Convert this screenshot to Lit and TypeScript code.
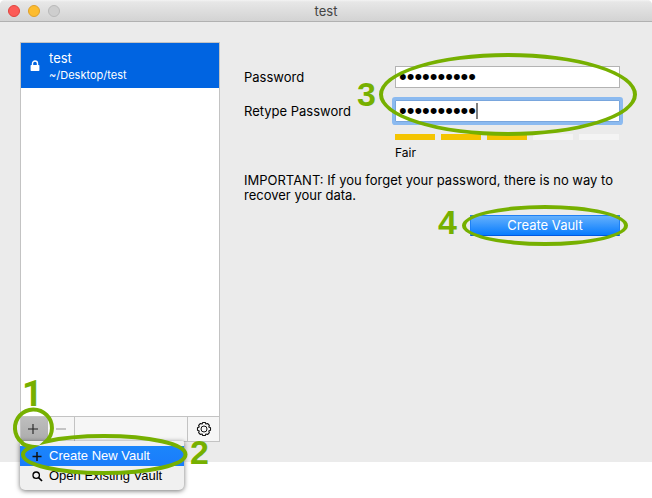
import { LitElement, html, css } from "lit";
import { customElement, property, state } from "lit/decorators.js";
import { classMap } from "lit/directives/class-map.js";

@customElement("vault-sidebar")
class VaultSidebar extends LitElement {
  @state() private menuOpen = true;

  static styles = css`
    :host { display: flex; flex-direction: column; box-sizing: border-box; position: relative; border: 1px solid #c3c3c3; background: #fff; }
    button { font: inherit; border: 0; padding: 0; margin: 0; color: inherit; background: none; }
    .vaults { flex: 1; list-style: none; margin: 0; padding: 0; }
    .vault { display: flex; width: 100%; height: 45px; align-items: center; gap: 9px; padding: 0 9px; box-sizing: border-box; background: #0064e1; color: #fff; text-align: left; }
    .text { display: flex; flex-direction: column; padding-bottom: 1px; }
    .name { font-size: 13px; line-height: 20px; }
    .path { font-size: 11px; line-height: 15px; }
    .tools { display: flex; height: 24px; border-top: 1px solid #c3c3c3; background: #f6f6f6; }
    .tool { width: 27px; display: grid; place-items: center; border-right: 1px solid #c3c3c3; box-sizing: border-box; }
    .add { padding-right: 3px; background: linear-gradient(#bebebe, #acacac); border: 0; }
    .gear { width: 32px; margin-left: auto; border-right: 0; border-left: 1px solid #c3c3c3; }
    .menu { position: absolute; top: 100%; left: -1px; width: 164px; padding: 5px 0 4px; background: #f0f0f0; border-radius: 1px 1px 5px 5px; box-shadow: 0 1px 5px rgba(0, 0, 0, 0.55); font: 13px/20px "Liberation Sans", Arial, sans-serif; color: #000; }
    .item { display: flex; align-items: center; width: 100%; height: 20px; padding: 0 0 0 12px; box-sizing: border-box; gap: 6px; white-space: nowrap; }
    .chosen { background: linear-gradient(#1b86fb, #1a7cfb); }
    .chosen span { color: #fff; }
    .callouts { position: absolute; left: -11px; bottom: -36px; pointer-events: none; }
    .callouts text { font: bold 34px "Liberation Sans", Arial, sans-serif; fill: #76b000; }
    .callouts .one { font: bold 36px Roboto, sans-serif; }
  `;

  render() {
    return html`
      <ul class="vaults">
        <li>
          <button class="vault">
            <svg width="10" height="12" viewBox="0 0 10 12"><path d="M2.5 5.5V3.5a2.5 2.5 0 0 1 5 0v2" fill="none" stroke="#fff" stroke-width="1.4"/><rect x="0.6" y="5" width="8.8" height="6" rx="0.7" fill="#fff"/></svg>
            <span class="text"><span class="name">test</span><span class="path">~/Desktop/test</span></span>
          </button>
        </li>
      </ul>
      <div class="tools">
        <button class="tool add" aria-label="Add vault" aria-expanded=${this.menuOpen} @click=${() => (this.menuOpen = !this.menuOpen)}>
          <svg width="10" height="10"><path d="M5 0v10M0 5h10" stroke="#222" stroke-width="1.1"/></svg>
        </button>
        <button class="tool" aria-label="Remove vault">
          <svg width="10" height="10"><path d="M0 5h10" stroke="#a4a4a4" stroke-width="1.2"/></svg>
        </button>
        <button class="tool gear" aria-label="Settings">
          <svg width="16" height="16" viewBox="-8 -8 16 16" fill="none" stroke="#111" stroke-linejoin="round">
            <path stroke-width="1.1" d="M-1.3 -6.5H1.3L1.9 -5L3.6 -5.5L5.4 -3.7L4.8 -2.1L6.5 -1.3V1.3L4.8 2.1L5.4 3.7L3.6 5.5L1.9 5L1.3 6.5H-1.3L-1.9 5L-3.6 5.5L-5.4 3.7L-4.8 2.1L-6.5 1.3V-1.3L-4.8 -2.1L-5.4 -3.7L-3.6 -5.5L-1.9 -5Z"/>
            <circle r="3" stroke-width="1"/>
          </svg>
        </button>
      </div>
      ${this.menuOpen
        ? html`<div class="menu" role="menu">
            <button class="item chosen" role="menuitem">
              <svg width="11" height="11"><path d="M5 1v9M.5 5.5h9" stroke="#111" stroke-width="1.5"/></svg><span>Create New Vault</span>
            </button>
            <button class="item" role="menuitem">
              <svg width="11" height="11" fill="none" stroke="#000"><circle cx="4.2" cy="4.2" r="3.2" stroke-width="1.3"/><path d="M6.5 6.5L10 10" stroke-width="1.7"/></svg><span>Open Existing Vault</span>
            </button>
          </div>`
        : ""}
      <svg class="callouts" width="204" height="104" viewBox="10 374 204 104" aria-hidden="true">
        <path d="M46 442.5C61 439 82 437 104 437C149 437 185.5 445 185.5 455.5C185.5 466 149 474 104 474C59 474 23 466 23 455.5C23 452.5 26.5 450 32 447.7C26 447 23 446 21.5 443A18.5 18.5 0 1 1 46 442.5Z" fill="none" stroke="#76b000" stroke-width="4"/>
        <text class="one" x="22" y="407">1</text>
        <text x="190" y="465">2</text>
      </svg>
    `;
  }
}

@customElement("vault-form")
class VaultForm extends LitElement {
  @property({ type: Number }) strength = 3;

  static styles = css`
    :host { display: block; font-size: 13px; line-height: 15px; }
    .fields { display: grid; grid-template-columns: 151px 1fr; row-gap: 12px; align-items: center; position: relative; }
    .box { position: relative; display: flex; }
    input { width: 100%; height: 22px; box-sizing: border-box; margin: 0; padding: 0 3px; border: 1px solid #b3b3b3; border-radius: 0; background: #fff; color: #000; font: 22px "Liberation Sans", Arial, sans-serif; outline: 0; }
    .active { border-color: #79a6dd; box-shadow: 0 0 0 3px #8bbaf0; border-radius: 1px; }
    .caret { position: absolute; left: 81px; top: 3px; width: 2px; height: 16px; background: #808080; }
    .meter { grid-column: 2; display: flex; gap: 6px; padding-right: 1px; }
    .bar { flex: 1; height: 6px; background: #f4f4f4; }
    .filled { background: #f4c400; }
    .rating { margin: 5px 0 0 151px; font-size: 12px; line-height: 15px; }
    .note { margin: 13px 0 12px; }
    .actions { display: flex; justify-content: flex-end; }
    .submit { position: relative; }
    .create { width: 150px; height: 21px; padding: 0; border: 1px solid #1e80f5; border-bottom-color: #0058e0; border-radius: 1px; background: linear-gradient(#64b0fc, #087cfe); color: #fff; font: inherit; display: block; }
    .ring { position: absolute; box-sizing: border-box; border: 4px solid #76b000; border-radius: 50%; pointer-events: none; }
    .ring-fields { left: 135px; right: -17px; top: -13px; height: 83px; }
    .ring-create { inset: -10px -8px; }
    .step { position: absolute; font: bold 34px/30px "Liberation Sans", Arial, sans-serif; color: #76b000; pointer-events: none; }
    .step-fields { left: 113px; top: 13px; }
    .step-create { left: -32px; top: -8px; }
  `;

  render() {
    return html`
      <form @submit=${(e: Event) => e.preventDefault()}>
        <div class="fields">
          <label for="password">Password</label>
          <div class="box"><input id="password" type="password" value="vaultvault" autocomplete="off" /></div>
          <label for="retype">Retype Password</label>
          <div class="box"><input id="retype" class="active" type="password" value="vaultvault" autocomplete="off" /><span class="caret"></span></div>
          <div class="meter" role="img" aria-label="Password strength">
            ${[0, 1, 2, 3, 4].map((i) => html`<span class=${classMap({ bar: true, filled: i < this.strength })}></span>`)}
          </div>
          <span class="ring ring-fields"></span>
          <span class="step step-fields">3</span>
        </div>
        <div class="rating">Fair</div>
        <p class="note">IMPORTANT: If you forget your password, there is no way to recover your data.</p>
        <div class="actions">
          <div class="submit">
            <button class="create" type="submit">Create Vault</button>
            <span class="ring ring-create"></span>
            <span class="step step-create">4</span>
          </div>
        </div>
      </form>
    `;
  }
}

@customElement("app-root")
class AppRoot extends LitElement {
  static styles = css`
    :host { display: flex; flex-direction: column; min-height: 100vh; box-sizing: border-box; padding-bottom: 36px; background: #fff; color: #000; font-family: Inter, "Noto Sans", sans-serif; }
    .window { flex: 1; display: flex; flex-direction: column; background: #ebebeb; border-radius: 5px 5px 0 0; }
    .titlebar { display: grid; grid-template-columns: 1fr auto 1fr; align-items: center; height: 22px; box-sizing: border-box; padding: 0 8px; border-bottom: 1px solid #b1b1b1; border-radius: 5px 5px 0 0; background: linear-gradient(#f4f4f4, #e7e7e7 2px, #d3d3d3); }
    .lights { display: flex; gap: 8px; }
    .light { width: 12px; height: 12px; padding: 0; box-sizing: border-box; border: 1px solid #e0443e; border-radius: 50%; background: #fc5b57; }
    .minimize { background: #fdbc2e; border-color: #e0a028; }
    .zoom { background: #cecece; border-color: #b9b9b9; }
    h1 { margin: 0; font-size: 13px; line-height: 18px; font-weight: 400; color: #444; }
    .content { flex: 1; display: grid; grid-template-columns: 200px 1fr; column-gap: 24px; padding: 20px 32px 20px 20px; }
    vault-form { padding-top: 24px; }
  `;

  render() {
    return html`
      <div class="window">
        <header class="titlebar">
          <div class="lights">
            <button class="light" aria-label="Close"></button>
            <button class="light minimize" aria-label="Minimize"></button>
            <button class="light zoom" aria-label="Zoom" disabled></button>
          </div>
          <h1>test</h1>
        </header>
        <main class="content">
          <vault-sidebar></vault-sidebar>
          <vault-form></vault-form>
        </main>
      </div>
    `;
  }
}
